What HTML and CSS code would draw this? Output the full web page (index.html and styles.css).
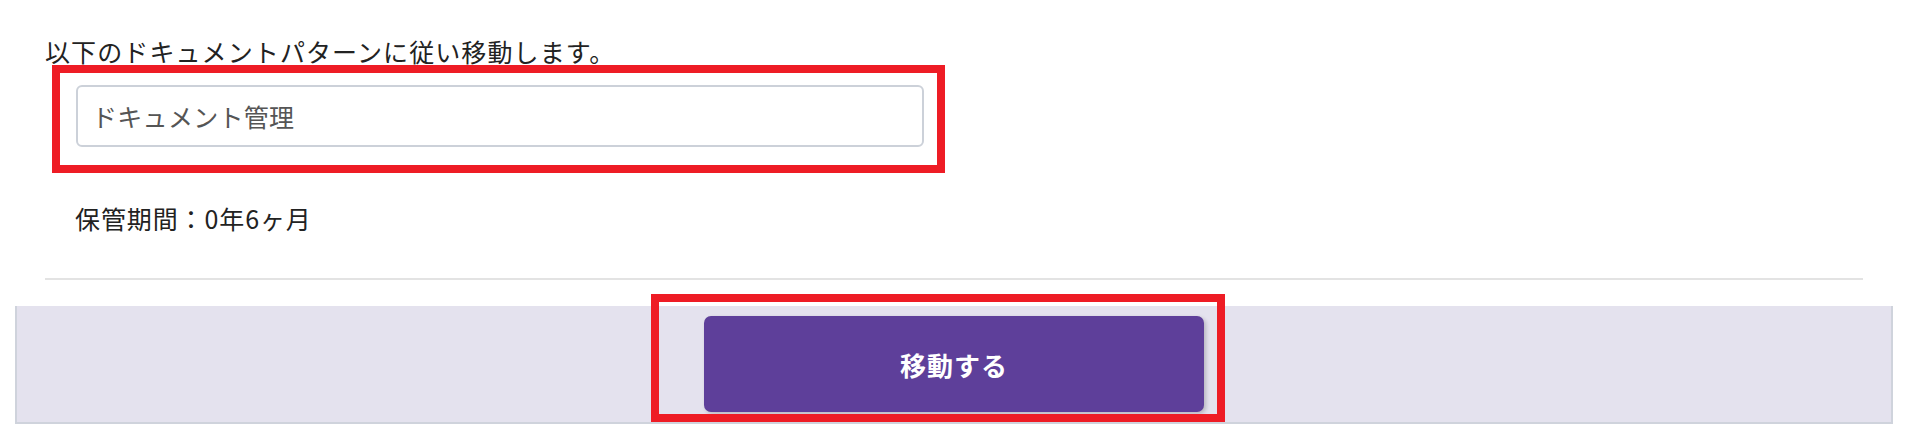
FILE: index.html
```html
<!DOCTYPE html>
<html lang="ja">
<head>
    <meta charset="UTF-8">
    <meta name="viewport" content="width=device-width, initial-scale=1.0">
    <title>ドキュメント移動</title>
    <link rel="stylesheet" href="styles.css">
</head>
<body>

    <div class="modal">
        <!-- 本文 -->
        <div class="modal-body">
            <p class="lead">以下のドキュメントパターンに従い移動します。</p>
            <input type="text" class="pattern-input" value="ドキュメント管理" readonly />
            <p class="retention">保管期間：0年6ヶ月</p>
            <hr class="divider" />
        </div>

        <!-- フッター -->
        <div class="modal-footer">
            <button class="move-button">移動する</button>
        </div>
    </div>

    <!-- 注釈の赤枠 -->
    <div class="mark mark-input"></div>
    <div class="mark mark-button"></div>

</body>
</html>
```

FILE: styles.css
```css
body {
    margin: 0;
    font-family: "Noto Sans CJK JP", "Noto Sans", sans-serif;
    background-color: #fff;
    color: #222;
}
.modal {
    margin-left: 15px;
    width: 1878px;
}
.modal-body {
    padding: 33px 30px 26px 30px;
}
.lead {
    margin: 0;
    font-size: 25px;
    line-height: 36px;
    letter-spacing: 1.1px;
}
.pattern-input {
    display: block;
    box-sizing: border-box;
    margin: 16px 0 0 31px;
    width: 848px;
    height: 62px;
    padding: 0 14px;
    border: 2px solid #ccd1d9;
    border-radius: 6px;
    font-family: inherit;
    font-size: 25px;
    letter-spacing: 0.3px;
    color: #555;
    outline: none;
}
.retention {
    margin: 53px 0 0 30px;
    font-size: 25px;
    line-height: 36px;
    letter-spacing: 0.9px;
}
.divider {
    margin: 42px 0 0 0;
    border: none;
    height: 2px;
    background-color: #e3e3e3;
}
.modal-footer {
    display: flex;
    justify-content: center;
    padding: 10px;
    background-color: #e4e2ee;
    border: 2px solid #cfd3dc;
    border-top: none;
}
.move-button {
    width: 500px;
    height: 96px;
    background-color: #5e3f9a;
    color: white;
    border: none;
    border-radius: 7px;
    font-family: inherit;
    font-size: 26px;
    font-weight: bold;
    letter-spacing: 1px;
    box-shadow: 2px 2px 4px rgba(0, 0, 0, 0.2);
    cursor: pointer;
}
.mark {
    position: absolute;
    box-sizing: border-box;
    border: 8px solid #ee1c25;
}
.mark-input {
    left: 52px;
    top: 65px;
    width: 893px;
    height: 108px;
}
.mark-button {
    left: 651px;
    top: 294px;
    width: 574px;
    height: 128px;
}
```
